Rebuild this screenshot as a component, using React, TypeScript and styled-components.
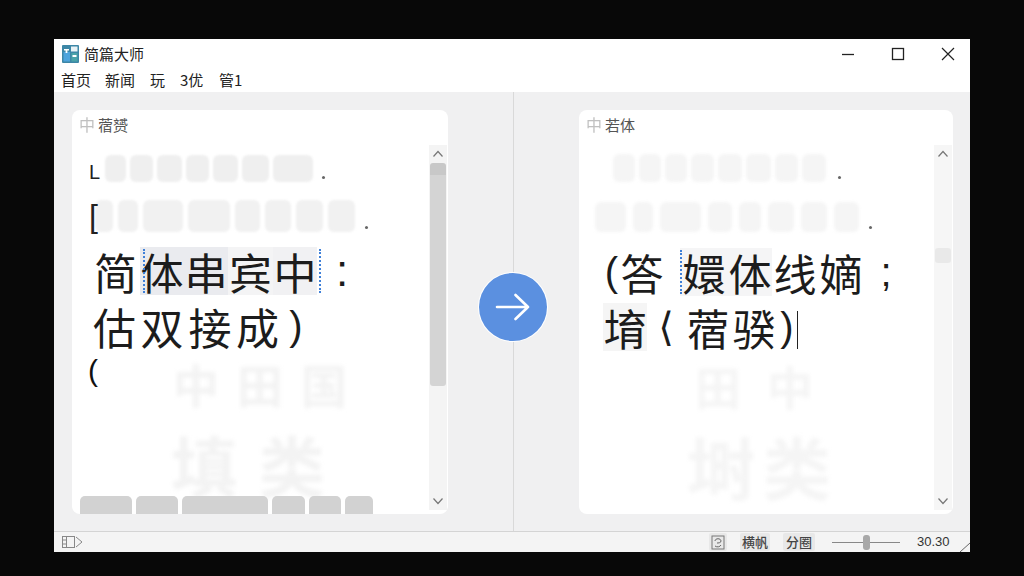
import React from "react";
import styled, { createGlobalStyle } from "styled-components";

const cjk = `"Noto Sans CJK SC", "Noto Sans", sans-serif`;

const Global = createGlobalStyle`
  html, body { margin: 0; padding: 0; width: 1024px; height: 576px; overflow: hidden; background: #080808; }
  body { font-family: ${cjk}; color: #1a1a1a; }
`;

const Page = styled.div`
  width: 1024px; height: 576px; box-sizing: border-box;
  padding: 39px 54px 24px; display: flex;
`;
const Win = styled.div`
  flex: 1; display: flex; flex-direction: column; background: #fff; overflow: hidden;
`;
const TitleBar = styled.div`
  height: 29px; flex: none; display: flex; align-items: center; padding: 0 0 0 8px;
`;
const AppName = styled.div`
  font-size: 15px; line-height: 20px; margin-left: 5px; flex: 1; color: #222;
`;
const WinButton = styled.div`
  width: 50px; height: 29px; box-sizing: border-box; padding-left: 6px; display: flex; align-items: center; justify-content: center;
`;
const MenuBar = styled.div`
  height: 24px; flex: none; display: flex; align-items: center; padding: 0 0 0 7px;
  background: #fff;
`;
const MenuItem = styled.div<{ $w: number }>`
  width: ${(p) => p.$w}px; font-size: 15px; line-height: 20px; color: #222; white-space: nowrap;
`;
const Main = styled.div`
  flex: 1; min-height: 0; display: flex; position: relative; background: #f0f0f1;
`;
const Pane = styled.div<{ $pad: string; $w: number }>`
  width: ${(p) => p.$w}px; flex: none; box-sizing: border-box; padding: ${(p) => p.$pad}; display: flex;
`;
const Divider = styled.div`
  width: 1px; flex: none; background: #d9d9d9;
`;
const Card = styled.div`
  flex: 1; background: #fff; border-radius: 8px; display: flex; flex-direction: column; overflow: hidden; min-width: 0;
`;
const CardHead = styled.div`
  height: 35px; flex: none; display: flex; align-items: flex-start; padding: 4px 0 0 7px; box-sizing: border-box;
`;
const HeadMark = styled.span`
  font-size: 16px; line-height: 21px; color: #c0c0c0; width: 19px; flex: none; filter: blur(0.5px);
`;
const HeadText = styled.span`
  font-size: 15px; line-height: 21px; color: #555;
`;
const CardBody = styled.div`
  flex: 1; min-height: 0; display: flex;
`;
const Content = styled.div<{ $left: number }>`
  flex: 1; min-width: 0; display: flex; flex-direction: column; padding-left: ${(p) => p.$left}px;
`;
const BlockRow = styled.div<{ $h: number; $top: number; $ml: number; $gap: number }>`
  height: ${(p) => p.$h}px; margin-top: ${(p) => p.$top}px; margin-left: ${(p) => p.$ml}px;
  flex: none; display: flex; align-items: stretch; gap: ${(p) => p.$gap}px;
`;
const Mark = styled.span<{ $size: number; $over: number }>`
  font-size: ${(p) => p.$size}px; line-height: 1; align-self: flex-end; color: #222; font-family: "Liberation Sans", sans-serif; font-weight: 400;
  width: 15px; margin-right: -${(p) => p.$over}px; flex: none; position: relative; z-index: 1;
`;
const Ghost = styled.div<{ $w: number; $tone: string; $blur: number }>`
  width: ${(p) => p.$w}px; background: ${(p) => p.$tone}; border-radius: 6px; flex: none; filter: blur(${(p) => p.$blur}px);
`;
const Dot = styled.span<{ $ml: number }>`
  width: 3px; height: 3px; border-radius: 50%; background: #666; align-self: flex-end; margin: 0 0 3px ${(p) => p.$ml}px; flex: none;
`;
const BigLine = styled.div<{ $top: number; $ml: number }>`
  height: 48px; margin-top: ${(p) => p.$top}px; margin-left: ${(p) => p.$ml}px; flex: none; display: flex; align-items: center;
`;
const Glyph = styled.span<{ $w: number; $hl?: string }>`
  width: ${(p) => p.$w}px; height: 48px; flex: none; display: flex; align-items: center; justify-content: center;
  font-size: 43px; line-height: 48px; color: #1c1c1c; background: ${(p) => p.$hl || "transparent"};
`;
const Punct = styled.span<{ $w: number; $size: number }>`
  width: ${(p) => p.$w}px; height: 48px; flex: none; display: flex; align-items: center; justify-content: center;
  font-family: "Liberation Sans", "DejaVu Sans", sans-serif; font-size: ${(p) => p.$size}px; line-height: 48px; color: #1c1c1c;
`;
const Caret = styled.span<{ $off: number }>`
  width: 0; height: 44px; flex: none; border-left: 2px dotted #3f80d8;
  margin: 0 -${(p) => p.$off + 2}px 0 ${(p) => p.$off}px; position: relative; z-index: 1;
`;
const TextCaret = styled.span`
  width: 1px; height: 38px; flex: none; background: #222; margin: 6px 0 0 0;
`;
const ParenRow = styled.div<{ $top: number }>`
  margin-top: ${(p) => p.$top}px; display: flex; align-items: flex-start; flex: none;
`;
const Paren = styled.div`
  width: 9px; height: 32px; font-size: 30px; line-height: 30px; color: #111; flex: none;
  font-family: "Liberation Sans", sans-serif; margin-left: -1px;
`;
const Shadow = styled.div<{ $size: number; $top: number; $ml: number; $gap: number; $tone: string }>`
  display: flex; gap: ${(p) => p.$gap}px; margin: ${(p) => p.$top}px 0 0 ${(p) => p.$ml}px; flex: none;
  font-size: ${(p) => p.$size}px; line-height: ${(p) => p.$size}px; font-weight: 700; color: ${(p) => p.$tone}; filter: blur(2px);
`;
const BottomBlocks = styled.div`
  margin-top: auto; margin-left: -9px; height: 20px; flex: none; display: flex; gap: 4px;
`;
const BottomBlock = styled.div<{ $w: number }>`
  width: ${(p) => p.$w}px; background: #d2d2d2; border-radius: 5px 5px 0 0; filter: blur(0.4px);
`;
const Scroll = styled.div<{ $track: string }>`
  width: 18px; flex: none; margin: 0 1px 4px 0; background: ${(p) => p.$track}; display: flex; flex-direction: column; align-items: center;
`;
const ScrollArrow = styled.div`
  height: 18px; flex: none; display: flex; align-items: center; justify-content: center;
`;
const ScrollTrack = styled.div`
  flex: 1; width: 100%; display: flex; flex-direction: column; align-items: center;
`;
const Thumb = styled.div<{ $top: number; $h: number; $tone: string }>`
  width: 16px; height: ${(p) => p.$h}px; margin-top: ${(p) => p.$top}px; background: ${(p) => p.$tone}; border-radius: 3px;
`;
const RoundButton = styled.div`
  position: absolute; left: 425px; top: 181px; width: 68px; height: 68px; border-radius: 50%;
  background: #5b90e0; box-shadow: 0 0 0 1px #fff; display: flex; align-items: center; justify-content: center;
`;
const Status = styled.div`
  height: 21px; flex: none; display: flex; align-items: center; padding: 0 0 0 8px; background: #f4f4f4;
  border-top: 1px solid #d4d4d4; box-sizing: border-box; position: relative;
`;
const Spacer = styled.div`
  flex: 1;
`;
const StatusBtn = styled.div<{ $w: number; $ml: number }>`
  width: ${(p) => p.$w}px; margin-left: ${(p) => p.$ml}px; height: 18px; background: #e8e8e8; border-radius: 2px;
  display: flex; align-items: center; justify-content: center; font-size: 13px; line-height: 18px; color: #444; font-weight: 500;
`;
const Slider = styled.div`
  width: 68px; height: 1px; background: #888; margin-left: 17px; display: flex; align-items: center; justify-content: center;
`;
const SliderKnob = styled.div`
  width: 7px; height: 15px; border-radius: 3px; background: #a8a8a8; flex: none;
`;
const Zoom = styled.div`
  width: 70px; padding-left: 17px; box-sizing: border-box; font-size: 13px; line-height: 18px; color: #333;
  font-family: "Liberation Sans", sans-serif;
`;
const Grip = styled.svg`
  position: absolute; right: 0; bottom: 0;
`;

const Up = () => (
  <svg width="12" height="8" viewBox="0 0 12 8"><path d="M1.5 6.5 6 1.5l4.5 5" fill="none" stroke="#777" strokeWidth="1.2" /></svg>
);
const Down = () => (
  <svg width="12" height="8" viewBox="0 0 12 8"><path d="M1.5 1.5 6 6.5l4.5-5" fill="none" stroke="#777" strokeWidth="1.2" /></svg>
);

const rows = {
  l1: [21, 23, 25, 23, 25, 27, 40],
  l2: [18, 20, 40, 42, 25, 26, 27, 27],
  r1: [22, 22, 22, 23, 24, 25, 23, 24],
  r2: [31, 20, 41, 24, 22, 26, 26, 25],
};
const bottom = [52, 42, 86, 33, 32, 28];

export default function App() {
  return (
    <Page>
      <Global />
      <Win>
        <TitleBar>
          <svg width="17" height="18" viewBox="0 0 17 18">
            <rect x="0" y="0" width="17" height="18" rx="1" fill="#3d87a6" />
            <rect x="1.5" y="7" width="6.5" height="9.5" fill="#4ea4dc" />
            <path d="M2 4h5v1.6H5.4V8H3.6V5.6H2z" fill="#fff" />
            <rect x="9" y="1.5" width="6.5" height="5" fill="#e8f2f5" />
            <rect x="9.5" y="8" width="6" height="8.5" fill="#4aa3a8" />
            <rect x="10.5" y="10" width="4" height="2" fill="#fff" />
          </svg>
          <AppName>简篇大师</AppName>
          <WinButton>
            <svg width="14" height="14" viewBox="0 0 14 14"><path d="M1 7.5h12" stroke="#222" strokeWidth="1.3" /></svg>
          </WinButton>
          <WinButton>
            <svg width="14" height="14" viewBox="0 0 14 14"><rect x="1.5" y="1.5" width="11" height="11" fill="none" stroke="#222" strokeWidth="1.3" /></svg>
          </WinButton>
          <WinButton>
            <svg width="14" height="14" viewBox="0 0 14 14"><path d="M1 1l12 12M13 1 1 13" stroke="#222" strokeWidth="1.2" /></svg>
          </WinButton>
        </TitleBar>
        <MenuBar>
          <MenuItem $w={44}>首页</MenuItem>
          <MenuItem $w={45}>新闻</MenuItem>
          <MenuItem $w={30}>玩</MenuItem>
          <MenuItem $w={39}>3优</MenuItem>
          <MenuItem $w={40}>管1</MenuItem>
        </MenuBar>
        <Main>
          <Pane $w={459} $pad="18px 65px 17px 18px">
            <Card>
              <CardHead>
                <HeadMark>中</HeadMark>
                <HeadText>蓿赟</HeadText>
              </CardHead>
              <CardBody>
                <Content $left={17}>
                  <BlockRow $h={27} $top={10} $ml={0} $gap={4}>
                    <Mark $size={20} $over={3}>L</Mark>
                    {rows.l1.map((w, i) => <Ghost key={i} $w={w} $tone="#efefef" $blur={1} />)}
                    <Dot $ml={5} />
                  </BlockRow>
                  <BlockRow $h={32} $top={18} $ml={0} $gap={5}>
                    <Mark $size={32} $over={14}>[</Mark>
                    {rows.l2.map((w, i) => <Ghost key={i} $w={w} $tone="#f1f1f1" $blur={1} />)}
                    <Dot $ml={5} />
                  </BlockRow>
                  <BigLine $top={15} $ml={2}>
                    <Glyph $w={49}>简</Glyph>
                    <Caret $off={3} />
                    <Glyph $w={44} $hl="#eaebef">体</Glyph>
                    <Glyph $w={44} $hl="#eaebef">串</Glyph>
                    <Glyph $w={45} $hl="#f4f4f5">宾</Glyph>
                    <Glyph $w={44} $hl="#f1f1f3">中</Glyph>
                    <Caret $off={2} />
                    <Punct $w={50} $size={44}>:</Punct>
                  </BigLine>
                  <BigLine $top={7} $ml={2}>
                    <Glyph $w={47}>估</Glyph>
                    <Glyph $w={48}>双</Glyph>
                    <Glyph $w={48}>接</Glyph>
                    <Glyph $w={47}>成</Glyph>
                    <Punct $w={30} $size={40}>)</Punct>
                  </BigLine>
                  <ParenRow $top={6}>
                    <Paren>(</Paren>
                    <Shadow $size={46} $top={4} $ml={76} $gap={18} $tone="#f3f3f3">
                      <span>中</span><span>田</span><span>国</span>
                    </Shadow>
                  </ParenRow>
                  <Shadow $size={66} $top={24} $ml={82} $gap={22} $tone="#f3f3f3">
                    <span>填</span><span>类</span>
                  </Shadow>
                  <BottomBlocks>
                    {bottom.map((w, i) => <BottomBlock key={i} $w={w} />)}
                  </BottomBlocks>
                </Content>
                <Scroll $track="#f4f4f4">
                  <ScrollArrow><Up /></ScrollArrow>
                  <ScrollTrack>
                    <Thumb $top={0} $h={223} $tone="linear-gradient(#c8c8c8 12px, #d4d4d4 12px)" />
                  </ScrollTrack>
                  <ScrollArrow><Down /></ScrollArrow>
                </Scroll>
              </CardBody>
            </Card>
          </Pane>
          <Divider />
          <Pane $w={456} $pad="18px 17px 17px 65px">
            <Card>
              <CardHead>
                <HeadMark>中</HeadMark>
                <HeadText>若体</HeadText>
              </CardHead>
              <CardBody>
                <Content $left={16}>
                  <BlockRow $h={28} $top={9} $ml={18} $gap={4}>
                    {rows.r1.map((w, i) => <Ghost key={i} $w={w} $tone="#f5f5f5" $blur={1.5} />)}
                    <Dot $ml={8} />
                  </BlockRow>
                  <BlockRow $h={30} $top={20} $ml={0} $gap={7}>
                    {rows.r2.map((w, i) => <Ghost key={i} $w={w} $tone="#f5f5f5" $blur={1.5} />)}
                    <Dot $ml={3} />
                  </BlockRow>
                  <BigLine $top={16} $ml={8}>
                    <Punct $w={17} $size={40}>(</Punct>
                    <Glyph $w={44}>答</Glyph>
                    <Glyph $w={16} />
                    <Caret $off={0} />
                    <Glyph $w={48} $hl="#f5f5f6">嬛</Glyph>
                    <Glyph $w={44} $hl="#f5f5f6">体</Glyph>
                    <Glyph $w={46}>线</Glyph>
                    <Glyph $w={46}>嫡</Glyph>
                    <Punct $w={44} $size={40}>;</Punct>
                  </BigLine>
                  <BigLine $top={7} $ml={8}>
                    <Glyph $w={44} $hl="#f5f5f5">堉</Glyph>
                    <Punct $w={38} $size={40}>⟨</Punct>
                    <Glyph $w={46}>蓿</Glyph>
                    <Glyph $w={46}>骙</Glyph>
                    <Punct $w={20} $size={40}>)</Punct>
                    <TextCaret />
                  </BigLine>
                  <Shadow $size={46} $top={11} $ml={100} $gap={26} $tone="#f5f5f5">
                    <span>田</span><span>中</span>
                  </Shadow>
                  <Shadow $size={68} $top={24} $ml={92} $gap={8} $tone="#f5f5f5">
                    <span>埘</span><span>类</span>
                  </Shadow>
                </Content>
                <Scroll $track="#f6f6f6">
                  <ScrollArrow><Up /></ScrollArrow>
                  <ScrollTrack>
                    <Thumb $top={85} $h={15} $tone="#e9e9e9" />
                  </ScrollTrack>
                  <ScrollArrow><Down /></ScrollArrow>
                </Scroll>
              </CardBody>
            </Card>
          </Pane>
          <RoundButton>
            <svg width="36" height="36" viewBox="0 0 36 36">
              <path d="M2 18H33M20.5 6 33 18 20.5 30" fill="none" stroke="#fff" strokeWidth="2.6" strokeLinecap="round" strokeLinejoin="round" />
            </svg>
          </RoundButton>
        </Main>
        <Status>
          <svg width="22" height="14" viewBox="0 0 22 14">
            <rect x="0.5" y="1.5" width="12" height="11" fill="none" stroke="#888" />
            <path d="M4.5 1.5v11M0.5 5h4M0.5 9h4M14 2l6 5-6 5" fill="none" stroke="#888" />
          </svg>
          <Spacer />
          <StatusBtn $w={18} $ml={0}>
            <svg width="14" height="15" viewBox="0 0 14 15">
              <rect x="1" y="1" width="12" height="13" fill="none" stroke="#777" />
              <path d="M4 6c0-3 6-3 6 0 0 2-3 2-4 2M4 11c2 1.5 5 1 6-1" fill="none" stroke="#666" />
            </svg>
          </StatusBtn>
          <StatusBtn $w={30} $ml={13}>横帆</StatusBtn>
          <StatusBtn $w={32} $ml={13}>分圈</StatusBtn>
          <Slider><SliderKnob /></Slider>
          <Zoom>30.30</Zoom>
          <Grip width="12" height="12" viewBox="0 0 12 12">
            <path d="M2 12 12 3" stroke="#666" strokeWidth="1" />
          </Grip>
        </Status>
      </Win>
    </Page>
  );
}
